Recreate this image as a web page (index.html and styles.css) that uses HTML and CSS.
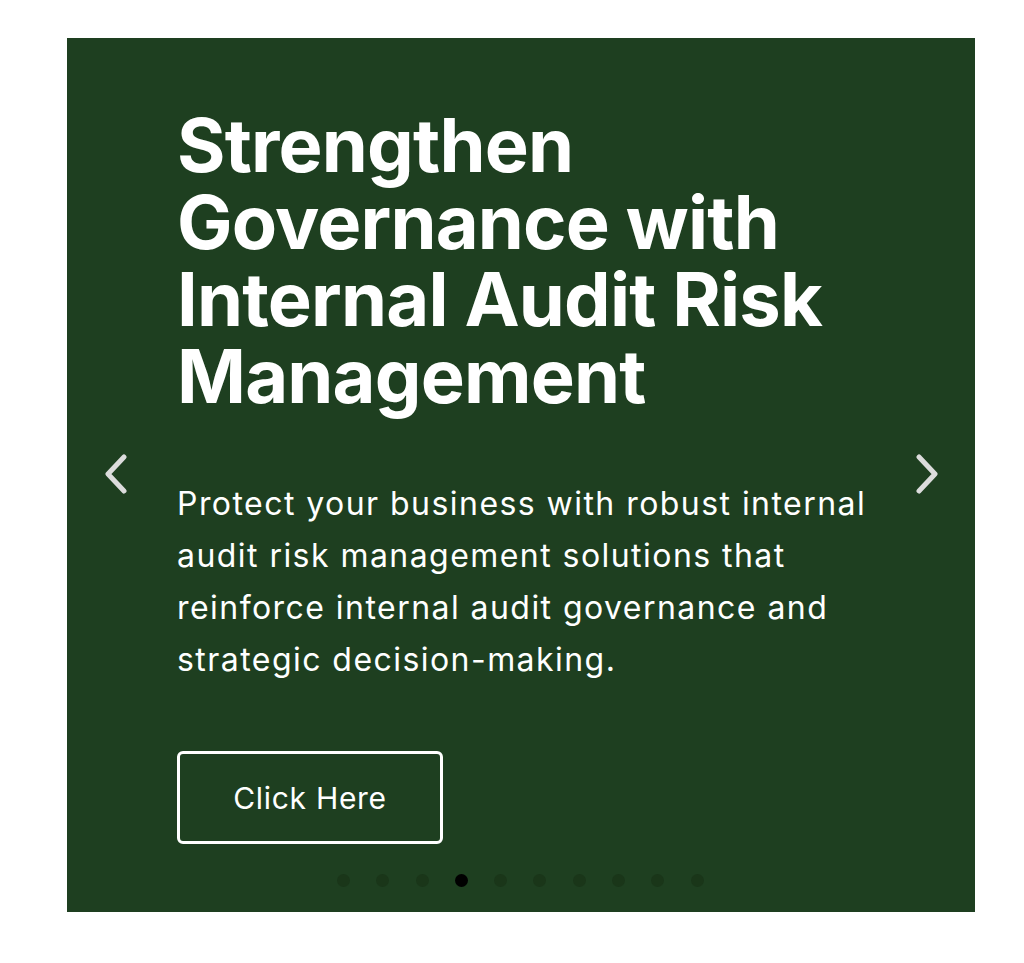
FILE: index.html
```html
<!DOCTYPE html>
<html lang="en">
<head>
<meta charset="utf-8">
<title>Slider</title>
<link rel="stylesheet" href="styles.css">
</head>
<body>
<section class="slider">
  <button class="arrow arrow-prev" aria-label="Previous">
    <svg viewBox="0 0 24 40" width="24" height="40"><path d="M20 3 L4 20 L20 37" fill="none" stroke="#dcdcdc" stroke-width="5" stroke-linecap="round" stroke-linejoin="round"/></svg>
  </button>
  <div class="slide">
    <h1 class="title">Strengthen Governance with Internal Audit Risk Management</h1>
    <p class="lead">Protect your business with robust internal audit risk management solutions that reinforce internal audit governance and strategic decision-making.</p>
    <a class="cta" href="#">Click Here</a>
  </div>
  <button class="arrow arrow-next" aria-label="Next">
    <svg viewBox="0 0 24 40" width="24" height="40"><path d="M4 3 L20 20 L4 37" fill="none" stroke="#dcdcdc" stroke-width="5" stroke-linecap="round" stroke-linejoin="round"/></svg>
  </button>
  <div class="dots">
    <span class="dot"></span>
    <span class="dot"></span>
    <span class="dot"></span>
    <span class="dot active"></span>
    <span class="dot"></span>
    <span class="dot"></span>
    <span class="dot"></span>
    <span class="dot"></span>
    <span class="dot"></span>
    <span class="dot"></span>
  </div>
</section>
</body>
</html>
```
FILE: styles.css
```css
html, body {
  margin: 0;
  padding: 0;
  background: #ffffff;
}

body {
  font-family: Inter, "Noto Sans", sans-serif;
  color: #ffffff;
}

.slider {
  position: relative;
  box-sizing: border-box;
  width: 908px;
  height: 874px;
  margin: 38px 0 0 67px;
  background: #1e3f20;
  padding: 69px 0 0 110px;
  display: flex;
  flex-direction: column;
}

.slide {
  display: flex;
  flex-direction: column;
  align-items: flex-start;
  width: 730px;
}

.title {
  margin: 0;
  font-size: 74px;
  line-height: 77px;
  font-weight: 700;
  letter-spacing: -0.8px;
  width: 660px;
}

.lead {
  margin: 63px 0 0;
  font-size: 32px;
  line-height: 52px;
  font-weight: 400;
  letter-spacing: 1.45px;
  width: 730px;
}

.cta {
  margin-top: 65px;
  box-sizing: border-box;
  width: 266px;
  height: 93px;
  border: 3.5px solid #ffffff;
  border-radius: 6px;
  display: flex;
  align-items: center;
  justify-content: center;
  font-size: 30px;
  letter-spacing: 0.7px;
  color: #ffffff;
  text-decoration: none;
}

.arrow {
  position: absolute;
  top: 416px;
  padding: 0;
  border: 0;
  background: none;
  width: 24px;
  height: 40px;
  cursor: pointer;
}

.arrow svg {
  display: block;
}

.arrow-prev {
  left: 37px;
}

.arrow-next {
  left: 848px;
}

.dots {
  position: absolute;
  left: 270px;
  top: 836px;
  display: flex;
  gap: 26.3px;
}

.dot {
  width: 13px;
  height: 13px;
  border-radius: 50%;
  background: #1a3619;
}

.dot.active {
  background: #000000;
}
```
